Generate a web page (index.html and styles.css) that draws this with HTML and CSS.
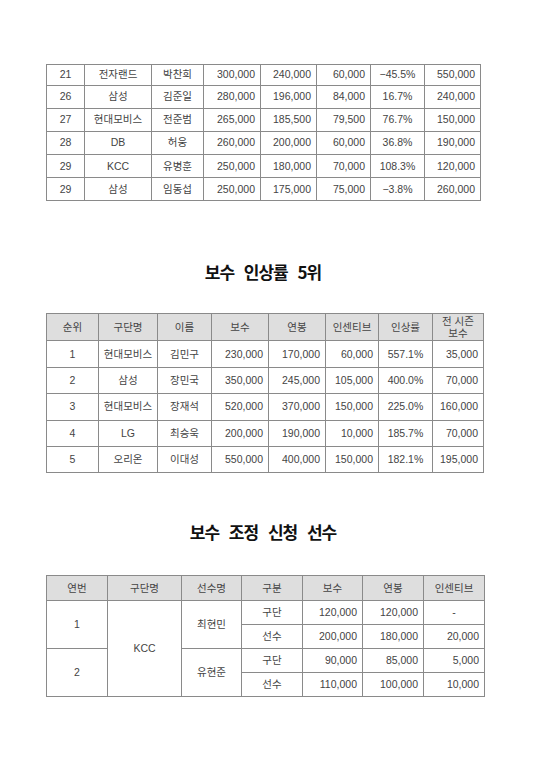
FILE: index.html
```html
<!DOCTYPE html>
<html lang="ko">
<head>
<meta charset="utf-8">
<link rel="stylesheet" href="styles.css">
</head>
<body>
<div class="page">
  <table class="tbl t1">
    <colgroup>
      <col style="width:38px"><col style="width:67px"><col style="width:52px"><col style="width:57px"><col style="width:56px"><col style="width:54px"><col style="width:54px"><col style="width:56px">
    </colgroup>
    <tr class="first"><td class="c">21</td><td class="c">전자랜드</td><td class="c">박찬희</td><td class="r">300,000</td><td class="r">240,000</td><td class="r">60,000</td><td class="c">−45.5%</td><td class="r">550,000</td></tr>
    <tr><td class="c">26</td><td class="c">삼성</td><td class="c">김준일</td><td class="r">280,000</td><td class="r">196,000</td><td class="r">84,000</td><td class="c">16.7%</td><td class="r">240,000</td></tr>
    <tr><td class="c">27</td><td class="c">현대모비스</td><td class="c">전준범</td><td class="r">265,000</td><td class="r">185,500</td><td class="r">79,500</td><td class="c">76.7%</td><td class="r">150,000</td></tr>
    <tr><td class="c">28</td><td class="c">DB</td><td class="c">허웅</td><td class="r">260,000</td><td class="r">200,000</td><td class="r">60,000</td><td class="c">36.8%</td><td class="r">190,000</td></tr>
    <tr><td class="c">29</td><td class="c">KCC</td><td class="c">유병훈</td><td class="r">250,000</td><td class="r">180,000</td><td class="r">70,000</td><td class="c">108.3%</td><td class="r">120,000</td></tr>
    <tr><td class="c">29</td><td class="c">삼성</td><td class="c">임동섭</td><td class="r">250,000</td><td class="r">175,000</td><td class="r">75,000</td><td class="c">−3.8%</td><td class="r">260,000</td></tr>
  </table>

  <h2 class="title t-rise">보수 인상률 5위</h2>

  <table class="tbl t2">
    <colgroup>
      <col style="width:52px"><col style="width:59px"><col style="width:54px"><col style="width:57px"><col style="width:57px"><col style="width:53px"><col style="width:54px"><col style="width:51px">
    </colgroup>
    <tr class="head"><th>순위</th><th>구단명</th><th>이름</th><th>보수</th><th>연봉</th><th>인센티브</th><th>인상률</th><th class="two">전 시즌<br>보수</th></tr>
    <tr><td class="c">1</td><td class="c">현대모비스</td><td class="c">김민구</td><td class="r">230,000</td><td class="r">170,000</td><td class="r">60,000</td><td class="c">557.1%</td><td class="r">35,000</td></tr>
    <tr><td class="c">2</td><td class="c">삼성</td><td class="c">장민국</td><td class="r">350,000</td><td class="r">245,000</td><td class="r">105,000</td><td class="c">400.0%</td><td class="r">70,000</td></tr>
    <tr><td class="c">3</td><td class="c">현대모비스</td><td class="c">장재석</td><td class="r">520,000</td><td class="r">370,000</td><td class="r">150,000</td><td class="c">225.0%</td><td class="r">160,000</td></tr>
    <tr><td class="c">4</td><td class="c">LG</td><td class="c">최승욱</td><td class="r">200,000</td><td class="r">190,000</td><td class="r">10,000</td><td class="c">185.7%</td><td class="r">70,000</td></tr>
    <tr><td class="c">5</td><td class="c">오리온</td><td class="c">이대성</td><td class="r">550,000</td><td class="r">400,000</td><td class="r">150,000</td><td class="c">182.1%</td><td class="r">195,000</td></tr>
  </table>

  <h2 class="title t-adj">보수 조정 신청 선수</h2>

  <table class="tbl t3">
    <colgroup>
      <col style="width:61px"><col style="width:74px"><col style="width:60px"><col style="width:61px"><col style="width:60px"><col style="width:61px"><col style="width:61px">
    </colgroup>
    <tr class="head"><th>연번</th><th>구단명</th><th>선수명</th><th>구분</th><th>보수</th><th>연봉</th><th>인센티브</th></tr>
    <tr><td class="c" rowspan="2">1</td><td class="c" rowspan="4">KCC</td><td class="c" rowspan="2">최현민</td><td class="c">구단</td><td class="r">120,000</td><td class="r">120,000</td><td class="c">-</td></tr>
    <tr><td class="c">선수</td><td class="r">200,000</td><td class="r">180,000</td><td class="r">20,000</td></tr>
    <tr><td class="c" rowspan="2">2</td><td class="c" rowspan="2">유현준</td><td class="c">구단</td><td class="r">90,000</td><td class="r">85,000</td><td class="r">5,000</td></tr>
    <tr><td class="c">선수</td><td class="r">110,000</td><td class="r">100,000</td><td class="r">10,000</td></tr>
  </table>
</div>
</body>
</html>
```

FILE: styles.css
```css
html, body {
  margin: 0;
  padding: 0;
  background: #ffffff;
}

.page {
  width: 540px;
  padding: 64px 0 0 46px;
  box-sizing: border-box;
  font-family: "Liberation Sans", "Noto Sans CJK KR", sans-serif;
  color: #444444;
}

.tbl {
  border-collapse: collapse;
  table-layout: fixed;
  font-size: 10.5px;
}

.tbl td, .tbl th {
  border: 1px solid #8a8a8a;
  padding: 0 4px;
  white-space: nowrap;
  overflow: hidden;
  font-weight: normal;
  line-height: 13px;
}

.tbl .c { text-align: center; }
.tbl .r { text-align: right; padding-right: 5px; }

.t1 { width: 434px; }
.t1 td { height: 22.2px; }
.t1 tr.first td { height: 19.5px; }

.t2 { width: 437px; }
.t2 td { height: 25.4px; }
.t2 th {
  height: 26px;
  background: #dedede;
  text-align: center;
}
.t2 th.two { line-height: 12.5px; }

.t3 { width: 438px; }
.t3 td { height: 23px; }
.t3 th {
  height: 24px;
  background: #dedede;
  text-align: center;
}

.title {
  margin: 0;
  width: 434px;
  text-align: center;
  font-family: "Noto Sans CJK KR", sans-serif;
  font-weight: bold;
  font-size: 17px;
  line-height: 20px;
  letter-spacing: -1px;
  word-spacing: 6px;
  color: #111;
}

.t-rise {
  margin-top: 61px;
  margin-bottom: 31px;
}

.t-adj {
  margin-top: 49px;
  margin-bottom: 33px;
}
```
